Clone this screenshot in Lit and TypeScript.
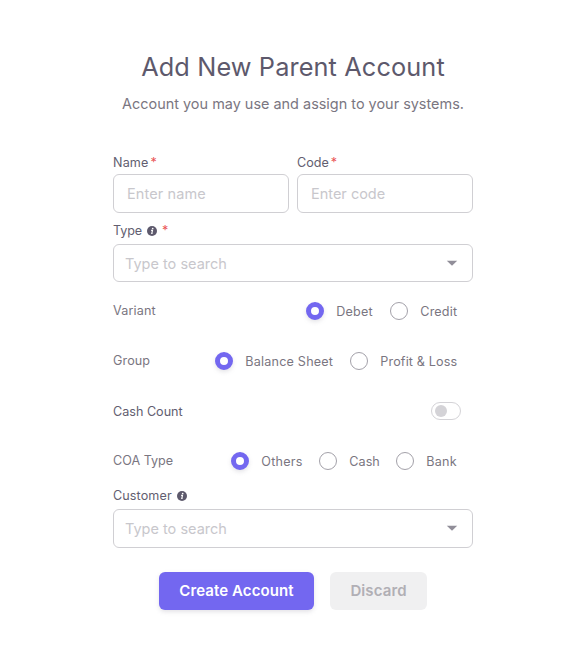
import { LitElement, html, css, svg } from 'lit';
import { customElement, property } from 'lit/decorators.js';

type Option = { text: string; width: number; spacing: number };

const infoIcon = html`<svg class="info" width="10" height="10" viewBox="0 0 10 10">
  ${svg`<circle cx="5" cy="5" r="5" fill="#5d596c"/>
  <circle cx="5.7" cy="2.5" r=".85" fill="#fff"/>
  <path d="M4.1 4.3H5.5L4.8 7.4H5.6" fill="none" stroke="#fff" stroke-width="1.15"/>`}
</svg>`;

@customElement('radio-row')
export class RadioRow extends LitElement {
  @property() label = '';
  @property({ type: Number }) spacing = 0;
  @property({ attribute: false }) options: Option[] = [];

  static styles = css`
    :host { display: flex; justify-content: space-between; height: 50px; padding-right: 16px; line-height: 18px; }
    .label { color: #7a7681; }
    .options { display: flex; height: 18px; }
    .option { display: flex; gap: 12.3px; align-items: center; white-space: nowrap; color: #7a7681; }
    .option span { padding-top: 1px; }
    .dot { box-sizing: border-box; flex: none; width: 18px; height: 18px; border: 1px solid #a3a1a9; border-radius: 50%; background: #fff; }
    .dot.on { border: 5px solid #7367f0; box-shadow: 0 2px 4px rgba(165, 163, 174, .3); }
  `;

  render() {
    return html`
      <div class="label" style="letter-spacing:${this.spacing}px">${this.label}</div>
      <div class="options">
        ${this.options.map((o, i) => html`
          <div class="option" style="width:${o.width}px">
            <i class="dot ${i === 0 ? 'on' : ''}"></i>
            <span style="letter-spacing:${o.spacing}px">${o.text}</span>
          </div>`)}
      </div>`;
  }
}

@customElement('app-root')
export class AppRoot extends LitElement {
  static styles = css`
    :host { display: block; box-sizing: border-box; width: 583px; height: 647px; padding: 48px 110px 0 113px; background: #fff; font: 12.6px/18px Inter, sans-serif; color: #625e70; }
    h1 { margin: 0; height: 38px; font-weight: 400; font-size: 25.3px; line-height: 38px; letter-spacing: .12px; text-align: center; white-space: nowrap; color: #5d596c; }
    .sub { height: 22px; margin-top: 7px; font-size: 14.45px; line-height: 22px; text-align: center; white-space: nowrap; color: #7a7681; }
    .pair { display: flex; gap: 8px; margin-top: 38px; }
    .pair > div { width: 176px; }
    .label { display: flex; height: 21px; line-height: 20px; align-items: flex-start; }
    .name { letter-spacing: .15px; }
    .customer { letter-spacing: .1px; }
    .info { margin: 5px 0 0 5px; }
    .star { margin-left: 2px; color: #ea5455; }
    .star.far { margin-left: 5px; }
    .field { box-sizing: border-box; display: flex; align-items: center; justify-content: space-between; height: 39px; padding: 0 13px; border: 1px solid #d0cfd3; border-radius: 6px; font-size: 14.5px; color: #c8c7cc; }
    .field.select { padding: 0 14px 0 11px; }
    .field.type { height: 38px; padding-top: 1px; }
    .field.name-field { letter-spacing: .1px; }
    .field svg { margin-bottom: 1px; }
    .gap { margin-top: 10px; height: 21px; line-height: 16px; letter-spacing: -.12px; }
    .gap .info { margin-top: 3px; }
    .radios { margin-top: 20px; }
    .cash { display: flex; justify-content: space-between; height: 50px; padding-right: 12px; }
    .cash span { padding-top: 1px; }
    .toggle { box-sizing: border-box; width: 30px; height: 18px; padding: 2px 3px; border: 1px solid #d4d3d7; border-radius: 9px; }
    .toggle i { display: block; width: 12px; height: 12px; border-radius: 50%; background: #d4d3d7; }
    .cust { margin-top: -15px; height: 22px; line-height: 18px; }
    .cust .info { margin-top: 4px; }
    .buttons { display: flex; gap: 16px; margin: 24px 0 0 46px; }
    button { height: 38px; padding: 0; border: 0; border-radius: 6px; font: 600 15px/38px Inter, sans-serif; letter-spacing: .1px; }
    .create { width: 155px; color: #fff; background: #7367f0; box-shadow: 0 2px 4px rgba(165, 163, 174, .3); }
    .discard { width: 97px; color: #b1afb5; background: #f0f0f1; }
  `;

  private caret() {
    return html`<svg width="12" height="6" viewBox="0 0 12 6"><path d="M.8 .8H11.2L6 5.8Z" fill="#918e99"/></svg>`;
  }

  render() {
    return html`
      <h1>Add New Parent Account</h1>
      <div class="sub">Account you may use and assign to your systems.</div>
      <div class="pair">
        <div>
          <div class="label name">Name<span class="star">*</span></div>
          <div class="field name-field">Enter name</div>
        </div>
        <div>
          <div class="label">Code<span class="star">*</span></div>
          <div class="field">Enter code</div>
        </div>
      </div>
      <div class="label gap">Type${infoIcon}<span class="star far">*</span></div>
      <div class="field select type">Type to search${this.caret()}</div>
      <radio-row class="radios" label="Variant" .spacing=${0.14} .options=${[
        { text: 'Debet', width: 84, spacing: 0.15 },
        { text: 'Credit', width: 67, spacing: 0.15 }]}></radio-row>
      <radio-row label="Group" .spacing=${0.1} .options=${[
        { text: 'Balance Sheet', width: 135, spacing: 0.2 },
        { text: 'Profit & Loss', width: 107, spacing: 0.14 }]}></radio-row>
      <div class="cash"><span>Cash Count</span><div class="toggle"><i></i></div></div>
      <radio-row label="COA Type" .options=${[
        { text: 'Others', width: 88, spacing: 0.25 },
        { text: 'Cash', width: 77, spacing: 0.05 },
        { text: 'Bank', width: 61, spacing: 0.25 }]}></radio-row>
      <div class="label cust customer">Customer${infoIcon}</div>
      <div class="field select">Type to search${this.caret()}</div>
      <div class="buttons">
        <button class="create">Create Account</button>
        <button class="discard">Discard</button>
      </div>`;
  }
}
